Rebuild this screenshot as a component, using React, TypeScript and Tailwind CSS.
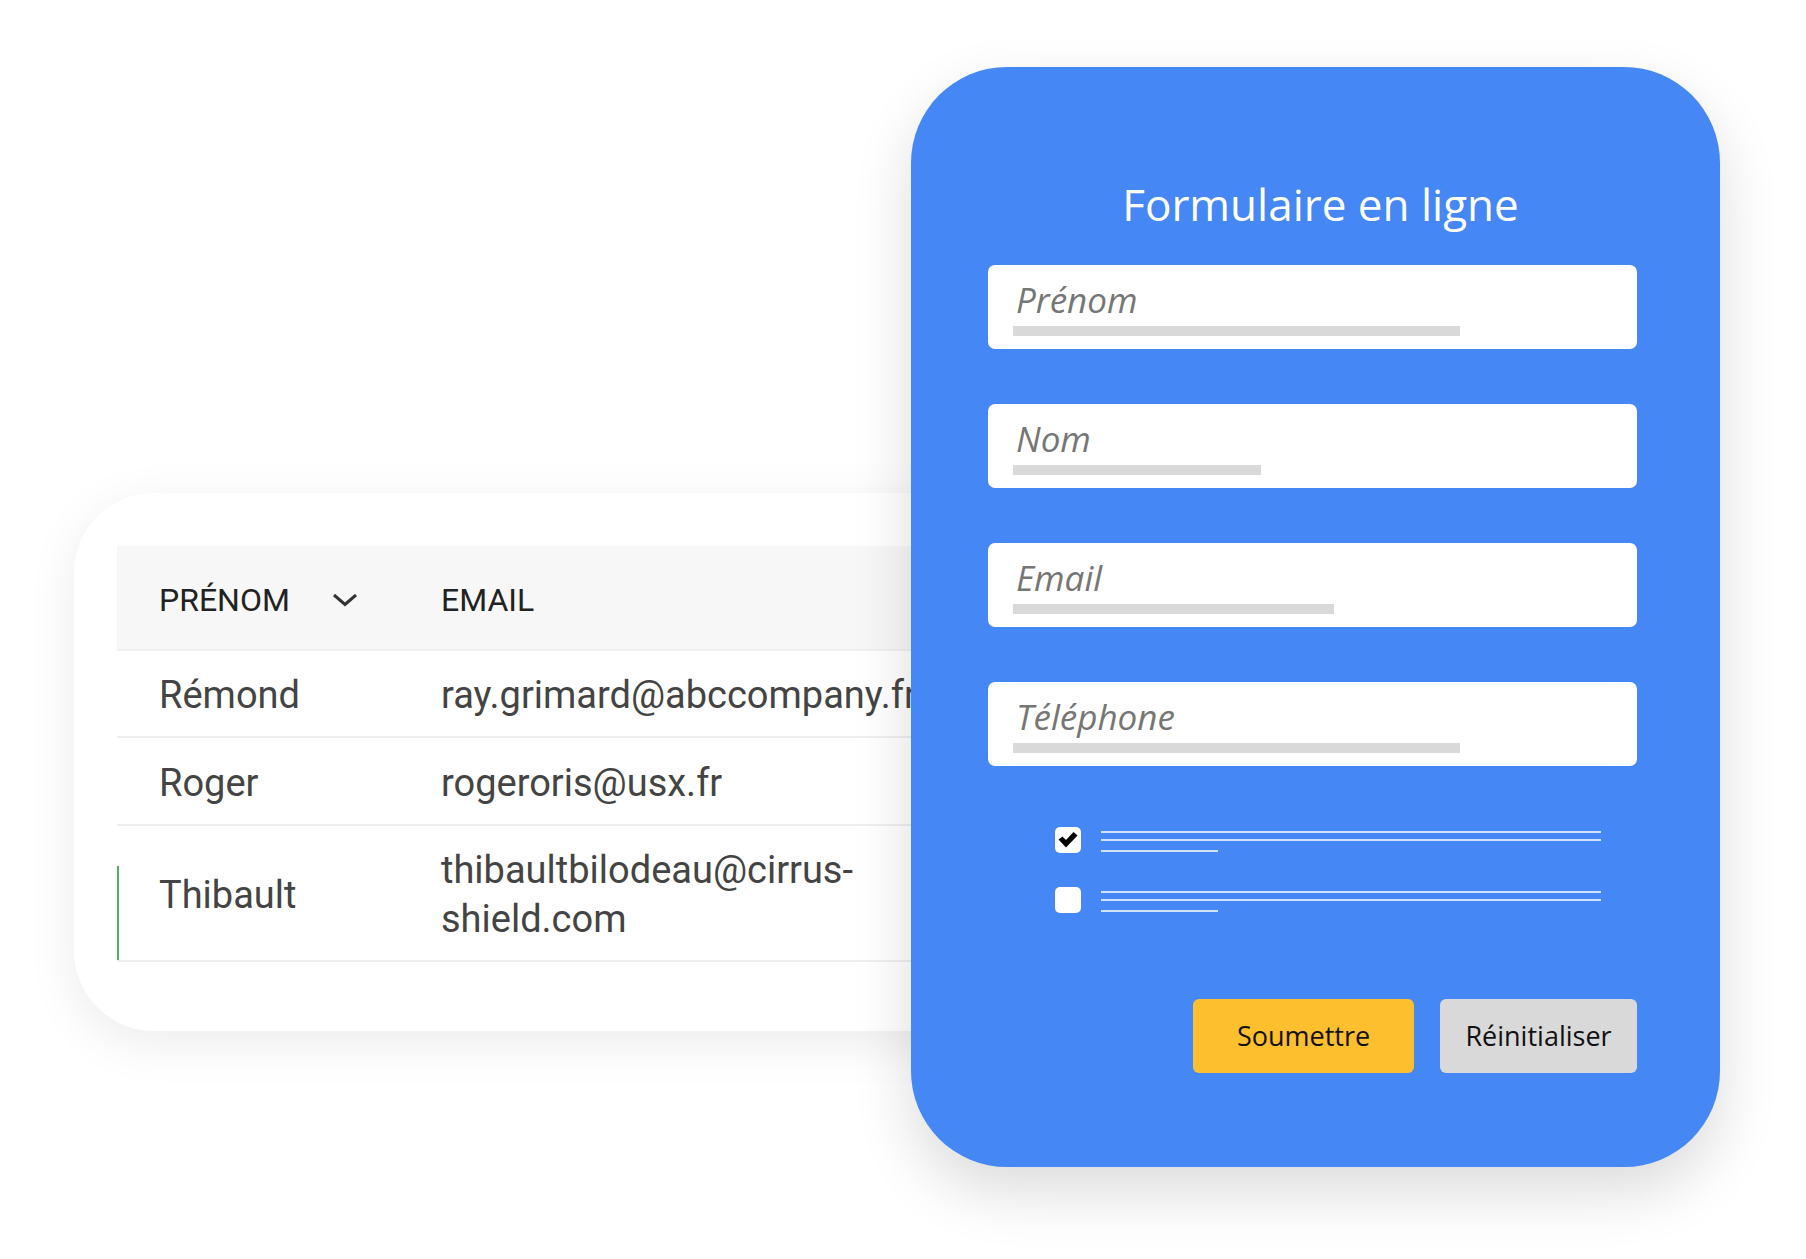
import React from "react";

const rows = [
  { first: "Rémond", email: ["ray.grimard@abccompany.fr"], h: "h-[87px]" },
  { first: "Roger", email: ["rogeroris@usx.fr"], h: "h-[88px]" },
  { first: "Thibault", email: ["thibaultbilodeau@cirrus-", "shield.com"], h: "h-[136px]", accent: true },
];

const fields = [
  { label: "Prénom", bar: "w-[447px]" },
  { label: "Nom", bar: "w-[248px]" },
  { label: "Email", bar: "w-[321px]" },
  { label: "Téléphone", bar: "w-[447px]" },
];

function CheckRow({ checked }: { checked: boolean }) {
  return (
    <div className="flex items-start gap-[20px] h-[26px]">
      <div className="w-[26px] h-[26px] bg-white rounded-[5px] flex items-center justify-center shrink-0">
        {checked && (
          <svg width="22" height="20" viewBox="0 0 22 20">
            <path d="M1.5 9.5 L5.5 6.5 L9 10 L16.5 2 L20.5 5.5 L9 17.5 Z" fill="#000" />
          </svg>
        )}
      </div>
      <div className="relative w-[500px] h-[26px]">
        <div className="absolute left-0 top-[4px] w-[500px] h-[2px] bg-[#d3e1fb]" />
        <div className="absolute left-0 top-[12px] w-[500px] h-[2px] bg-[#d3e1fb]" />
        <div className="absolute left-0 top-[23px] w-[117px] h-[2px] bg-[#d3e1fb]" />
      </div>
    </div>
  );
}

export default function App() {
  return (
    <div className="relative w-[1806px] h-[1259px] bg-white overflow-hidden">
      {/* Table card */}
      <div className="pt-[493px] pl-[74px]">
        <div
          className="w-[960px] h-[538px] rounded-[80px] bg-white shadow-[0_12px_50px_rgba(0,0,0,0.08)] pt-[53px] pl-[43px] overflow-hidden"
          style={{ fontFamily: "Roboto, 'Liberation Sans', sans-serif" }}
        >
          <div className="w-[900px]">
            <div className="flex items-center h-[105px] pt-[4px] bg-[#f7f7f7] border-b-2 border-[#efefef] text-[32px] text-[#222]">
              <div className="w-[324px] pl-[42px] flex items-center">
                <span>PRÉNOM</span>
                <svg className="ml-[42px]" width="26" height="14" viewBox="0 0 26 14">
                  <polyline points="2,2 13,11.5 24,2" fill="none" stroke="#333" strokeWidth="3" />
                </svg>
              </div>
              <div>EMAIL</div>
            </div>
            {rows.map((r) => (
              <div
                key={r.first}
                className={`relative flex items-center ${r.h} pt-[4px] border-b-2 border-[#efefef] text-[38px] text-[#444] leading-[49px]`}
              >
                {r.accent && <div className="absolute left-0 top-[40px] bottom-0 w-[2px] bg-[#4fae72]" />}
                <div className="w-[324px] pl-[42px]">{r.first}</div>
                <div className="whitespace-nowrap">
                  {r.email.map((e) => (
                    <div key={e}>{e}</div>
                  ))}
                </div>
              </div>
            ))}
          </div>
        </div>
      </div>

      {/* Blue form card */}
      <div
        className="absolute left-[911px] top-[67px] w-[809px] h-[1100px] rounded-[96px] bg-[#4487f5] shadow-[0_25px_60px_rgba(0,0,0,0.14)] pl-[77px] pr-[83px] pt-[115px]"
        style={{ fontFamily: "'Open Sans', 'Noto Sans', sans-serif" }}
      >
        <h1 className="text-center text-white text-[44px] leading-none pl-[16px]">Formulaire en ligne</h1>
        <div className="mt-[39px] flex flex-col gap-[55px]">
          {fields.map((f) => (
            <div key={f.label} className="h-[84px] bg-white rounded-[7px] pt-[17px] pl-[25px]">
              <div className="italic text-[35px] leading-none text-[#767676] pl-[3px]">{f.label}</div>
              <div className={`mt-[9px] h-[10px] bg-[#d9d9d9] ${f.bar}`} />
            </div>
          ))}
        </div>
        <div className="mt-[61px] ml-[67px] flex flex-col gap-[34px]">
          <CheckRow checked={true} />
          <CheckRow checked={false} />
        </div>
        <div className="mt-[86px] flex justify-end gap-[26px]">
          <button className="w-[221px] h-[74px] rounded-[6px] bg-[#fdbf2d] text-[27px] text-[#111]">Soumettre</button>
          <button className="w-[197px] h-[74px] rounded-[6px] bg-[#d9d9d9] text-[27px] text-[#111]">Réinitialiser</button>
        </div>
      </div>
    </div>
  );
}
